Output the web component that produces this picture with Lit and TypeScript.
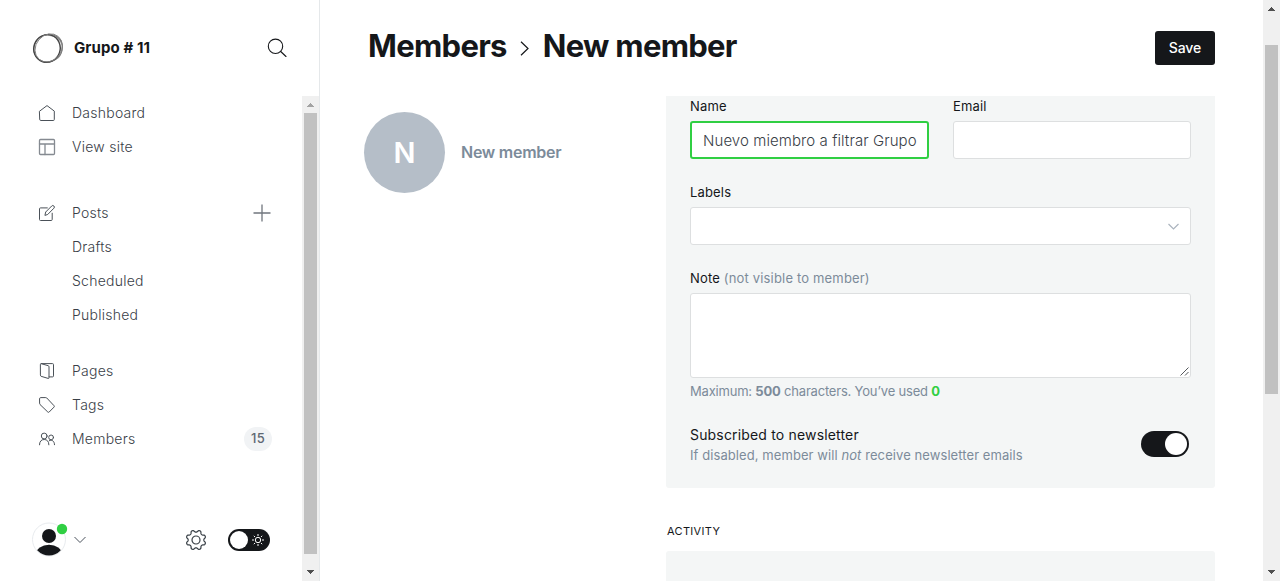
import { LitElement, html, css, svg } from "lit";
import { customElement, property } from "lit/decorators.js";

const icons: Record<string, unknown> = {
  home: svg`<path d="M.7 6.100 8 .6l7.300 5.500v8.400a1 1 0 0 1-1 1H1.700a1 1 0 0 1-1-1z"/>`,
  site: svg`<g stroke="#858a91" stroke-width="1.300"><rect x=".5" y=".5" width="15" height="15" rx="1"/><path d="M.5 5h15M6 5v10.500"/></g>`,
  posts: svg`<path d="M8.300 2.900H1.500a1 1 0 0 0-1 1v10.600a1 1 0 0 0 1 1h10.700a1 1 0 0 0 1-1V8.200M6 10l.7-3 6-6a1.400 1.400 0 0 1 2.200 2.200L9 9.200z"/>`,
  pages: svg`<path d="M1.400 1.300a.7.7 0 0 1 .9-.6l6.900 2a1 1 0 0 1 .8 1v11a.7.7 0 0 1-.9.700l-7-2.100a1 1 0 0 1-.7-1zM2.200.6h11.300a1 1 0 0 1 1 1v11.300a1 1 0 0 1-1 1h-3.400"/>`,
  tags: svg`<path d="M.6 1.500a1 1 0 0 1 1-.9h5.200a1.500 1.500 0 0 1 1 .4l7.200 7.700a1 1 0 0 1 0 1.400L10.200 15a1 1 0 0 1-1.400 0L1 7.500a1.500 1.500 0 0 1-.4-1z"/>`,
  members: svg`<circle cx="5.200" cy="5" r="2.900"/><path d="M.5 13.800c0-3.500 1.900-5.300 4.700-5.300s4.700 1.800 4.700 5.300"/><circle cx="12.100" cy="6.400" r="2.400"/><path d="M10.400 9.600c2.800-1.300 5.100.7 5.100 4.100"/>`,
};

// Outline of an eight-lobed cog, sampled around its centre.
const cog =
  "M" +
  Array.from({ length: 96 }, (_, i) => {
    const a = (i / 96) * Math.PI * 2;
    const r = 8.9 - 1.15 * Math.tanh(1.6 * Math.cos(8 * a));
    return `${(11 + r * Math.cos(a)).toFixed(2)} ${(11 + r * Math.sin(a)).toFixed(2)}`;
  }).join("L") +
  "Z";

@customElement("scroll-rail")
export class ScrollRail extends LitElement {
  @property({ type: Boolean, reflect: true }) atTop = false;
  static styles = css`
    :host { display: flex; flex-direction: column; box-sizing: border-box; width: 17px; background: #f0f0f0; flex: none; }
    .arrow { display: block; width: 17px; height: 17px; flex: none; fill: #505050; }
    :host([attop]) .up { fill: #a3a3a3; }
    .track { flex: 1; display: flex; flex-direction: column; padding: var(--before, 0) 2px 0; }
    .thumb { height: var(--thumb); background: #c1c1c1; }
  `;
  render() {
    return html`<svg class="arrow up" viewBox="0 0 17 17" shape-rendering="crispEdges"><path d="M8 7h1v1h1v1h1v1h1v1H5v-1h1V9h1V8h1z"/></svg>
      <div class="track"><div class="thumb"></div></div>
      <svg class="arrow down" viewBox="0 0 17 17" shape-rendering="crispEdges"><path d="M5 6h7v1h-1v1h-1v1H9v1H8V9H7V8H6V7H5z"/></svg>`;
  }
}

@customElement("nav-row")
export class NavRow extends LitElement {
  @property() icon = "";
  @property() label = "";
  static styles = css`
    :host { display: flex; align-items: center; height: 34px; padding: 0 31px 0 39px; font-size: 14px; letter-spacing: 0.25px; color: #394047; }
    .icon { width: 16px; height: 16px; margin-right: 17px; fill: none; stroke: #4a5158; stroke-width: 1; overflow: visible; stroke-linejoin: round; stroke-linecap: round; }
    .label { flex: 1; line-height: 20px; font-weight: 360; }
  `;
  render() {
    return html`<svg class="icon" viewBox="0 0 16 16">${icons[this.icon] ?? ""}</svg>
      <span class="label">${this.label}</span><slot></slot>`;
  }
}

@customElement("app-root")
export class AppRoot extends LitElement {
  static styles = css`
    :host { display: flex; width: 100%; height: 581px; overflow: hidden; background: #fff; color: #15171a; font-family: Inter, "Liberation Sans", sans-serif; font-size: 13px; }
    * { box-sizing: border-box; }
    svg { flex: none; display: block; }
    .side { width: 320px; flex: none; display: flex; flex-direction: column; border-right: 1px solid #e5e8ea; }
    .brand { height: 96px; display: flex; align-items: center; padding: 0 32px; flex: none; }
    .logo { width: 32px; height: 32px; fill: none; }
    .site { flex: 1; margin: -1px 0 0 10px; font-size: 15px; font-weight: 650; letter-spacing: 0.1px; }
    .search { width: 20px; height: 20px; fill: none; stroke: #15171a; stroke-width: 1.100; stroke-linecap: round; }
    .sidebody { flex: 1; display: flex; min-height: 0; }
    .menu { flex: 1; display: flex; flex-direction: column; }
    .second { margin-top: 32px; }
    .third { margin-top: 22px; }
    .plus { width: 18px; height: 18px; stroke: #70767d; stroke-width: 1.300; fill: none; }
    .count { height: 24px; width: 28px; margin-right: -1px; border-radius: 12px; background: #f1f3f5; color: #5d6772; font-size: 13px; line-height: 23px; text-align: center; letter-spacing: 0.3px; font-weight: 500; }
    .foot { margin-top: auto; height: 82px; display: flex; align-items: center; padding: 0 32px; }
    .user { width: 36px; height: 36px; }
    .chev { width: 12px; height: 8px; margin-left: 6px; fill: none; stroke: #4b535c; }
    .gear { width: 22px; height: 22px; margin-left: auto; fill: none; stroke: #394047; stroke-width: 1.200; }
    .night { width: 42px; height: 22px; margin-left: 21px; }
    .siderail { --thumb: 441px; }
    .mainrail { --thumb: 349px; --before: 28px; }
    .main { flex: 1; display: flex; flex-direction: column; min-width: 0; padding: 0 48px 0 44px; }
    .head { height: 96px; flex: none; display: flex; align-items: center; padding-left: 4px; }
    .title { display: flex; align-items: center; margin: -4px 0 0; font-size: 31px; font-weight: 700; line-height: 40px; letter-spacing: -0.7px; flex: 1; }
    .crumb { width: 9px; height: 15px; margin: 4px 14px 0 13px; fill: none; stroke: #15171a; stroke-width: 1.200; }
    .save { width: 60px; height: 34px; border: 0; padding: 0; border-radius: 3px; background: #15171a; color: #fff; font: 500 14px/34px Inter, sans-serif; letter-spacing: -0.1px; }
    .body { display: grid; grid-template-columns: 302px 549px; }
    .person { display: flex; align-items: center; height: 81px; margin-top: 16px; }
    .avatar { width: 81px; height: 81px; border-radius: 50%; background: #b5bec8; color: #fff; font-size: 29px; font-weight: 600; line-height: 82px; text-align: center; }
    .pname { margin: -2px 0 0 16px; font-size: 16px; font-weight: 600; letter-spacing: -0.25px; color: #7c8b9a; }
    .panel { height: 392px; background: #f4f6f6; border-radius: 0 0 3px 3px; padding: 0 24px; display: flex; flex-direction: column; }
    .pair { display: grid; grid-template-columns: 239px 238px; gap: 24px; }
    .label { display: block; line-height: 20px; height: 20px; margin-bottom: 5px; letter-spacing: 0.17px; }
    .field { height: 38px; width: 100%; display: flex; align-items: center; background: #fff; border: 1px solid #dddfe0; border-radius: 3px; padding: 0 12px; }
    .active { border: 2px solid #30cf43; padding: 1px 10px 0 11px; }
    .value { overflow: hidden; white-space: nowrap; font-size: 15px; font-weight: 350; line-height: 22px; letter-spacing: 0.08px; color: #394047; }
    .gap { margin-top: 23px; }
    .select { justify-content: flex-end; padding-right: 11px; }
    .caret { width: 11px; height: 7px; fill: none; stroke: #abb4be; stroke-width: 1.200; }
    .note { height: 85px; align-items: flex-end; justify-content: flex-end; padding: 0 1px 1px 0; }
    .grip { width: 9px; height: 9px; stroke: #55585c; }
    .muted { color: #7c8b9a; }
    .used { color: #30cf43; }
    .hint { line-height: 20px; margin-top: 3px; letter-spacing: -0.2px; }
    .sub { display: flex; justify-content: space-between; align-items: flex-start; margin: 24px 2px 0 0; }
    .subtitle { font-size: 14px; line-height: 20px; letter-spacing: 0.17px; }
    .subtext { line-height: 20px; letter-spacing: 0.08px; }
    .switch { width: 48px; height: 26px; margin-top: 6px; border-radius: 13px; background: #15171a; padding: 2px; display: flex; justify-content: flex-end; }
    .knob { width: 22px; height: 22px; border-radius: 50%; background: #fff; }
    .acthead { margin: 33px 0 10px 1px; font-size: 11px; font-weight: 400; line-height: 20px; letter-spacing: 0.32px; }
    .activity { height: 80px; border-radius: 3px; background: #f4f6f6; }
  `;

  render() {
    return html`
      <aside class="side">
        <div class="brand">
          <svg class="logo" viewBox="0 0 32 32"><path d="M12 2.500C18 .5 28.500 3 30.300 11c1.500 7-.8 13-4.500 16 3-4.500 4.600-9.500 3.400-14.800C27 7 20 2.500 12 4z" fill="#b8b8b8"/><ellipse cx="16" cy="16.300" rx="14.600" ry="13.500" stroke="#777" stroke-width="1" transform="rotate(-35 16 16)"/><ellipse cx="15.200" cy="16.800" rx="13.200" ry="13.900" stroke="#444" stroke-width="1.400" transform="rotate(20 16 16)"/><ellipse cx="16.500" cy="15.500" rx="12.800" ry="14.900" stroke="#808080" stroke-width=".9" transform="rotate(40 16 16)"/></svg>
          <span class="site">Grupo # 11</span>
          <svg class="search" viewBox="0 0 20 20"><circle cx="8.500" cy="8.300" r="7.200"/><path d="m13.700 13.500 5.300 5"/></svg>
        </div>
        <div class="sidebody">
          <nav class="menu">
            <nav-row icon="home" label="Dashboard"></nav-row>
            <nav-row icon="site" label="View site"></nav-row>
            <nav-row class="second" icon="posts" label="Posts"><svg class="plus" viewBox="0 0 18 18"><path d="M9 .5v17M.5 9h17"/></svg></nav-row>
            <nav-row label="Drafts"></nav-row>
            <nav-row label="Scheduled"></nav-row>
            <nav-row label="Published"></nav-row>
            <nav-row class="third" icon="pages" label="Pages"></nav-row>
            <nav-row icon="tags" label="Tags"></nav-row>
            <nav-row icon="members" label="Members"><span class="count">15</span></nav-row>
            <div class="foot">
              <svg class="user" viewBox="0 0 36 36"><defs><clipPath id="disc"><circle cx="17" cy="17.500" r="16"/></clipPath></defs><circle cx="17" cy="17.500" r="16.500" fill="#fff" stroke="#e8ebee"/><g fill="#15171a" clip-path="url(#disc)"><circle cx="17" cy="14" r="7"/><ellipse cx="17" cy="32" rx="13" ry="9.300"/></g><circle cx="30" cy="7" r="5.200" fill="#30cf43"/></svg>
              <svg class="chev" viewBox="0 0 12 8"><path d="m.5 1 5.500 5.500L11.500 1"/></svg>
              <svg class="gear" viewBox="0 0 22 22"><circle cx="11" cy="11" r="4"/><path stroke-linejoin="round" d=${cog}></path></svg>
              <svg class="night" viewBox="0 0 42 22"><rect width="42" height="22" rx="11" fill="#15171a"/><circle cx="11" cy="11" r="9" fill="#fff"/><g fill="none" stroke="#fff"><circle cx="30" cy="11" r="2.700"/><path d="M30 5v2M30 15v2M24 11h2M34 11h2M25.800 6.800l1.300 1.300M32.900 13.900l1.300 1.300M25.800 15.200l1.300-1.300M32.900 8.100l1.300-1.300"/></g></svg>
            </div>
          </nav>
          <scroll-rail class="siderail" atTop></scroll-rail>
        </div>
      </aside>
      <main class="main">
        <header class="head">
          <h2 class="title"><span>Members</span><svg class="crumb" viewBox="0 0 9 15"><path d="m1 .7 7 6.800-7 6.800"/></svg><span>New member</span></h2>
          <button class="save">Save</button>
        </header>
        <div class="body">
          <div class="person"><div class="avatar">N</div><span class="pname">New member</span></div>
          <section>
            <div class="panel">
              <div class="pair">
                <div><span class="label">Name</span><div class="field active"><span class="value">Nuevo miembro a filtrar Grupo</span></div></div>
                <div><span class="label">Email</span><div class="field"></div></div>
              </div>
              <div class="gap"><span class="label">Labels</span><div class="field select"><svg class="caret" viewBox="0 0 11 7"><path d="m.5 1 5 5 5-5"/></svg></div></div>
              <div class="gap"><span class="label">Note <span class="muted">(not visible to member)</span></span>
                <div class="field note"><svg class="grip" viewBox="0 0 9 9"><path d="M.5 8.500l8-8M5 8.500l3.500-3.500"/></svg></div>
                <div class="hint muted">Maximum: <b>500</b> characters. You’ve used <b class="used">0</b></div>
              </div>
              <div class="sub"><div><div class="subtitle">Subscribed to newsletter</div><div class="subtext muted">If disabled, member will <em>not</em> receive newsletter emails</div></div><div class="switch"><div class="knob"></div></div></div>
            </div>
            <h4 class="acthead">ACTIVITY</h4>
            <div class="activity"></div>
          </section>
        </div>
      </main>
      <scroll-rail class="mainrail"></scroll-rail>
    `;
  }
}
